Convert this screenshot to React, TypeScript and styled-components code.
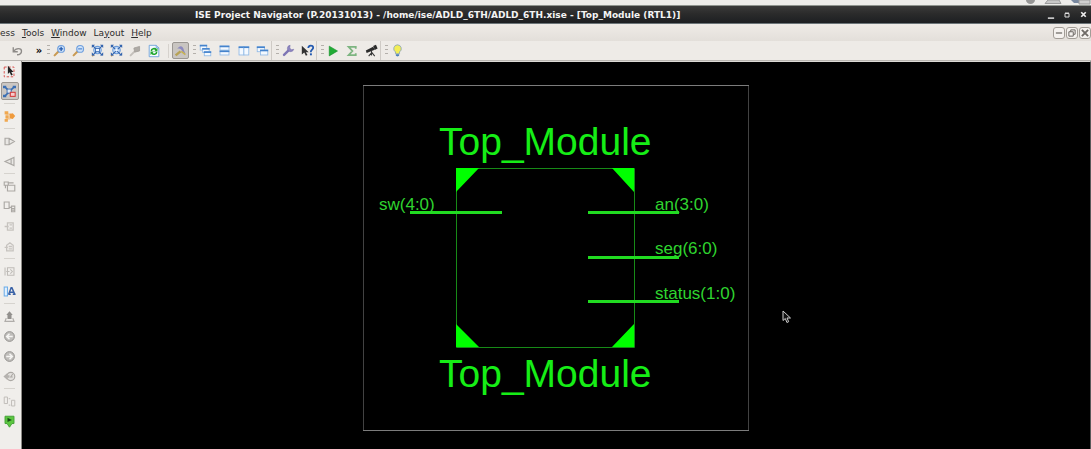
import React from "react";
import styled, { createGlobalStyle, css } from "styled-components";

const GlobalStyle = createGlobalStyle`
  * { box-sizing: border-box; }
  body { margin: 0; background: #000; font-family: "DejaVu Sans", sans-serif; }
  button { font: inherit; color: inherit; border: 0; padding: 0; background: none; }
`;

const Window = styled.div`
  display: flex;
  flex-direction: column;
  min-height: 100vh;
  overflow: hidden;
`;

const DesktopStrip = styled.div`
  display: flex;
  justify-content: flex-end;
  height: 5px;
  background: #edecea;
`;

const TitleBar = styled.header`
  display: flex;
  align-items: center;
  height: 19px;
  border-top: 1px solid #8f948f;
  border-bottom: 1px solid #6b7478;
  background: linear-gradient(#3a3a3a, #2b2b2b 45%, #1d1f22);
  color: #f4f4f4;
`;

const Title = styled.h1`
  flex: 1;
  margin: 0;
  padding-left: 195px;
  font-size: 9px;
  line-height: 16px;
  font-weight: bold;
  white-space: nowrap;
`;

const WindowControls = styled.div`
  display: flex;
  gap: 4px;
  padding-right: 2px;
`;

const WindowButton = styled.button`
  display: grid;
  place-items: center;
  width: 12px;
  height: 12px;
`;

const MenuBar = styled.nav`
  display: flex;
  align-items: center;
  gap: 7px;
  height: 17px;
  background: linear-gradient(#efebe7, #e3dfda);
  color: #2c2c2c;
`;

const MenuItem = styled.button`
  font-size: 9px;
  line-height: 16px;
`;

const DocumentControls = styled.div`
  display: flex;
  gap: 1px;
  margin-left: auto;
`;

const DocumentButton = styled.button`
  display: grid;
  place-items: center;
  width: 12px;
  height: 12px;
  border: 1px solid #a29d97;
  border-radius: 3px;
  background: #f5f2ef;
`;

const Toolbar = styled.div`
  display: flex;
  height: 20px;
  background: #eeebe7;
  border-bottom: 1px solid #b9b6b1;
`;

const HistoryGroup = styled.div`
  display: flex;
  align-items: center;
  gap: 10px;
  width: 43px;
  padding-left: 9px;
`;

const ToolGroup = styled.div<{ $open?: boolean }>`
  display: flex;
  align-items: center;
  gap: 3px;
  padding-left: 4px;
  padding-right: ${(p) => (p.$open ? "0" : "1px")};
  border-right: ${(p) => (p.$open ? "0" : "1px solid #cfcbc6")};
`;

const Grip = styled.span`
  width: 3px;
  height: 11px;
  margin-right: -2px;
  background: repeating-linear-gradient(#b4b0ab 0 1px, #eeebe7 1px 4px);
`;

const ToolButton = styled.button<{ $active?: boolean; $narrow?: boolean }>`
  display: grid;
  place-items: center;
  width: ${(p) => (p.$narrow ? "8px" : "16px")};
  height: 16px;
  font-size: 10px;
  line-height: 12px;
  font-weight: bold;
  ${(p) =>
    p.$active &&
    css`
      width: 17px;
      height: 17px;
      border: 1px solid #9b9792;
      border-radius: 2px;
      background: #c9c5c1;
    `}
`;

const Divider = styled.span<{ $across?: boolean }>`
  ${(p) =>
    p.$across
      ? css`
          width: 11px;
          height: 1px;
          margin: 2px 0;
          background: #d6d3ce;
        `
      : css`
          width: 1px;
          height: 14px;
          margin-left: 3px;
          background: #d6d2cd;
        `}
`;

const Workspace = styled.main`
  display: flex;
  flex: 1;
`;

const SideBar = styled.aside`
  display: flex;
  flex-direction: column;
  align-items: center;
  width: 22px;
  padding-right: 2px;
  background: #f0eeeb;
  border-right: 1px solid #8d8a86;
`;

const SideButton = styled.button<{ $active?: boolean }>`
  display: grid;
  place-items: center;
  width: 18px;
  height: 20px;
  ${(p) =>
    p.$active &&
    css`
      height: 18px;
      margin: 1px 0;
      border: 1px solid #9b9792;
      border-radius: 2px;
      background: #cbc7c3;
    `}
`;

const Canvas = styled.section`
  position: relative;
  display: flex;
  flex: 1;
  justify-content: center;
  align-items: flex-start;
  padding-top: 23px;
  background: #000;
  border-top: 1px solid #dcdad6;
  border-right: 1px solid #5a5a5a;
`;

const Pointer = styled.svg`
  position: absolute;
  left: calc(50% + 226px);
  top: 248px;
`;

const SchematicText = styled.text<{ $size: number }>`
  font-family: "Liberation Sans", Arial, sans-serif;
  font-size: ${(p) => p.$size}px;
  fill: ${(p) => (p.$size > 20 ? "#16ee16" : "#2fd42f")};
`;

type Art = { children: React.ReactNode; size?: number };
const Icon = ({ children, size = 13 }: Art) => (
  <svg width={size} height={size} viewBox="0 0 16 16" fill="none" aria-hidden="true">
    {children}
  </svg>
);

const Magnifier = ({ sign }: { sign: React.ReactNode }) => (
  <Icon>
    <path d="M2 14 L7 9" stroke="#c99a52" strokeWidth="2.6" strokeLinecap="round" />
    <circle cx="10" cy="6" r="4.2" fill="#cfe2f8" stroke="#6f9fdd" strokeWidth="1.4" />
    {sign}
  </Icon>
);

const ZoomFit = ({ box }: { box?: boolean }) => (
  <Icon>
    <circle cx="8" cy="7.5" r="4.6" fill="#c4dcf8" stroke="#6a9ad8" strokeWidth="1.3" />
    <path d="M3 13 L1.5 15" stroke="#d39b4b" strokeWidth="2" />
    <path d="M1 1h4L1 5zM15 1h-4l4 4zM1 14V10l4 4zM15 14V10l-4 4z" fill="#3465ae" />
    <path d="M2 2l12 12M14 2L2 14" stroke="#3465ae" strokeWidth="1.4" />
    {box ? <circle cx="8" cy="7.5" r="1.8" fill="#eef6ff" /> : <rect x="5.5" y="5.5" width="5" height="4" fill="#eef6ff" stroke="#3465ae" />}
  </Icon>
);

const Pane = ({ x, y, w, h }: { x: number; y: number; w: number; h: number }) => (
  <g>
    <rect x={x + 0.5} y={y + 0.5} width={w} height={h} fill="#f4f9ff" stroke="#8db8e6" />
    <rect x={x} y={y} width={w + 1} height="2" fill="#4583cc" />
  </g>
);

const BACK = "M12 8H5M8 4.5L4.5 8L8 11.5";
const FORWARD = "M4 8h7M8 4.5L11.5 8L8 11.5";

const Disc = ({ d }: { d: string }) => (
  <Icon>
    <circle cx="8" cy="8" r="6" fill="#bfbdba" stroke="#94928f" strokeWidth="1.2" />
    <path d={d} stroke="#f6f5f3" strokeWidth="1.8" />
  </Icon>
);

const zoomTools: [string, React.ReactNode][] = [
  ["Zoom in", <Magnifier sign={<path d="M10 3.5v5M7.5 6h5" stroke="#1f57ad" strokeWidth="1.5" />} />],
  ["Zoom out", <Magnifier sign={<path d="M7.5 6h5" stroke="#4b83cf" strokeWidth="1.4" />} />],
  ["Zoom to full view", <ZoomFit />],
  ["Zoom to box", <ZoomFit box />],
  ["Zoom to selected", (
    <Icon>
      <path d="M2 14l4-4" stroke="#c4c0bb" strokeWidth="2.4" strokeLinecap="round" />
      <path d="M6 5L13 3V8.500L7 10z" fill="#aeaaa5" stroke="#a29e99" />
    </Icon>
  )],
  ["Refresh", (
    <Icon size={14}>
      <path d="M2.5 1.5h8l3 3v10h-11z" fill="#f4faff" stroke="#6a9fd8" />
      <path d="M10.5 1.5v3h3" stroke="#6a9fd8" />
      <path d="M5 8c0-3 4-3.5 5.5-1.5M11 9c0 3-4 3.5-5.5 1.5" stroke="#1fa62b" strokeWidth="1.8" />
      <path d="M12 4.5v4H8zM4 12.5v-4h4z" fill="#1fa62b" />
    </Icon>
  )],
];

const windowTools: [string, React.ReactNode][] = [
  ["Cascade", <Icon><Pane x={1} y={1} w={8} h={6} /><Pane x={4} y={5} w={8} h={5} /><Pane x={6} y={9} w={8} h={5} /></Icon>],
  ["Tile horizontally", <Icon><Pane x={2} y={2} w={11} h={5} /><Pane x={2} y={8} w={11} h={5} /></Icon>],
  ["Tile vertically", <Icon><Pane x={2} y={3} w={6} h={10} /><Pane x={8} y={3} w={6} h={10} /></Icon>],
  ["Float", <Icon><Pane x={1} y={3} w={9} h={6} /><Pane x={5} y={7} w={9} h={6} /></Icon>],
];

const helpTools: [string, React.ReactNode][] = [
  ["Design properties", (
    <Icon>
      <path d="M2.5 13.5L9 7" stroke="#7d75b4" strokeWidth="3" strokeLinecap="round" />
      <path d="M10 1.5a4 4 0 1 0 4.5 5L11.5 7 9.5 5z" fill="#8d86c0" stroke="#6f68a6" strokeWidth=".6" />
    </Icon>
  )],
  ["What's this", (
    <Icon>
      <path d="M1 2v11l3-2.5 2 4 2-1-2-3.5h3.5z" fill="#333" />
      <path d="M9 5c0-4 6-4 6-.5C15 7 12 7 12 10" stroke="#245ab0" strokeWidth="2.2" />
      <rect x="11" y="11.5" width="2.4" height="2.4" fill="#245ab0" />
    </Icon>
  )],
];

const runTools: [string, React.ReactNode][] = [
  ["Run", <Icon size={12}><path d="M3 1.5L14 8 3 14.5z" fill="#22ab36" stroke="#0f9126" strokeWidth=".8" /></Icon>],
  ["Summary", <Icon size={12}><path d="M13 5V2.5H3.5L8.500 8l-5 5.500H13V11" stroke="#7db581" strokeWidth="2.4" /></Icon>],
  ["Analyze", (
    <Icon>
      <path d="M1 8L10 3.500l2 3.500L2 11z" fill="#2b2b2b" />
      <path d="M10 2.500l3.500-1.500 2 4.500L12 7.500z" fill="#2b2b2b" />
      <path d="M8 8v3L4.500 15M8 10l4 5M8 9v5" stroke="#3a3a3a" strokeWidth="1.3" />
    </Icon>
  )],
];

const tipTools: [string, React.ReactNode][] = [
  ["Tip of the day", (
    <Icon>
      <path d="M8 1a4.800 4.800 0 0 0-2.500 8.800V12h5V9.800A4.800 4.800 0 0 0 8 1z" fill="#f3ee55" stroke="#8ea7b5" strokeWidth="1.1" />
      <path d="M6 12.5h4v2L8 15.5 6 14.5z" fill="#4c7fb8" />
    </Icon>
  )],
];

const GREY = "#aba8a4";

const sideGroups: [string, React.ReactNode][][] = [
  [
    ["Select", (
      <Icon>
        <rect x="1.5" y="2.5" width="12" height="12" stroke="#d9534f" strokeWidth="1.2" strokeDasharray="3 2" />
        <path d="M6 1v10l2.200-2 1.800 4 2-1-1.800-3.500H13z" fill="#222" />
      </Icon>
    )],
    ["Select nets", (
      <Icon>
        <path d="M2 2l12 12M14 2L2 14" stroke="#3b6fb4" strokeWidth="1.8" />
        <rect x="5" y="5" width="5" height="5" fill="#dce8f6" stroke="#2f62a8" />
        <path d="M0 1h4v3H0zM12 1h4v3h-4zM0 12h4v3H0z" fill="#3b6fb4" />
        <rect x="9" y="9" width="6" height="5" fill="#f6cccc" stroke="#d43c3c" strokeWidth="1.3" />
      </Icon>
    )],
  ],
  [["Add symbols", (
    <Icon>
      <path d="M4 5h6M4 11h5M9 8h4" stroke="#f0b473" strokeWidth="1.2" />
      <path d="M2 1.500h4.500v4H2zM3 6.500h4v4H3zM2 11h4v3.500H2z" fill="#f0a850" />
      <path d="M8 5l4-1 3 3.500-3 3.500-4-1z" fill="#ef9a3c" />
    </Icon>
  )]],
  [
    ["Forward cone", <Icon><path d="M2.5 4h5L14 8l-6.500 4h-5zM7.500 4v8" stroke={GREY} strokeWidth="1.4" fill="#e9e7e4" /></Icon>],
    ["Backward cone", <Icon><path d="M13.5 3v10L2.5 8zM10 5v6" stroke={GREY} strokeWidth="1.4" fill="#e9e7e4" /></Icon>],
  ],
  [
    ["Push into", <Icon><path d="M5.5 6.500h9v7h-9zM1.5 2.500h5v4h-5zM3 6.500V10M7 3.500h6" stroke={GREY} strokeWidth="1.4" /></Icon>],
    ["Pop out", <Icon><path d="M1.5 2.500h6v8h-6zM10.5 7.500h4v7h-4zM8 9h3M11 10.500h4M11 12.500h4" stroke={GREY} strokeWidth="1.4" /></Icon>],
    ["Expand", <Icon><path d="M5.5 3.500h7v9h-7zM2 8h5M8 6h3M8 10h3" stroke="#c6c3bf" strokeWidth="1.6" /></Icon>],
    ["Collapse", <Icon><path d="M4.5 13.500v-7l4-3 4 3v7zM2 9h4M7 8h4M7 11h4" stroke="#c6c3bf" strokeWidth="1.6" /></Icon>],
  ],
  [
    ["Show pins", <Icon><path d="M2.5 3v10M5.5 3.500h8v9h-8zM4 8h4M9 5.500L11.5 8 9 10.500" stroke="#bfbcb8" strokeWidth="1.3" /></Icon>],
    ["Add text", (
      <Icon>
        <rect x="1.5" y="2.5" width="4" height="11" fill="#e3f1ff" stroke="#6faee8" strokeWidth="1.3" />
        <path d="M7 11.500L10 3.500h1l3.500 8M8.500 9h5M6.500 11.500h3M12 11.500h3.500" stroke="#3a62a6" strokeWidth="1.8" />
      </Icon>
    )],
  ],
  [
    ["Up a level", <Icon><path d="M8 1.5L12 6H10.500v5h-5V6H4z" fill="#92908d" /><path d="M4 10l-1.500 4h11L12 10" stroke="#b0adaa" strokeWidth="1.5" /></Icon>],
    ["Back", <Disc d={BACK} />],
    ["Forward", <Disc d={FORWARD} />],
    ["History", (
      <Icon>
        <circle cx="9.5" cy="8" r="5" fill="#e3e1de" stroke={GREY} strokeWidth="1.4" />
        <path d="M12 5L9.500 8.500H12" stroke={GREY} strokeWidth="1.3" />
        <path d="M0.5 8L5 4v2.500h3v3H5V12z" fill="#b5b2af" />
      </Icon>
    )],
  ],
  [
    ["Compare", <Icon><path d="M1.5 2.500h4v8h-4zM10.5 6.500h4v7h-4zM7 12.500h2M7 4.500h2" stroke="#bfbcb8" strokeWidth="1.2" /></Icon>],
    ["Add marker", (
      <Icon>
        <path d="M2.5 1.500h11v9H11L8 15l-3-4.500H2.5z" fill="#5cc740" stroke="#45a138" strokeWidth="1.2" />
        <path d="M5.500 3.500v5L11 6z" fill="#174d17" />
      </Icon>
    )],
  ],
];

const Tools = ({ items }: { items: [string, React.ReactNode][] }) => (
  <>
    <Grip />
    {items.map(([label, art]) => (
      <ToolButton key={label} aria-label={label}>{art}</ToolButton>
    ))}
  </>
);

const Schematic = () => (
  <svg width="386" height="346" viewBox="0 0 386 346" role="img" aria-label="Top_Module schematic">
    <path d="M0 .5H386M0 345.5H386" stroke="#7c7c7c" />
    <path d="M.5 1V345M385.5 1V345" stroke="#424242" />
    <path d="M93.5 83.5H271.5V262.5H93.5z" fill="none" stroke="#178a17" />
    <path d="M93 83h23l-23 24zM271 83h-22l22 24zM93 262h23l-23-23zM271 262h-22l22-23z" fill="#0f0" />
    <path d="M47 127.500h92M225 127.500h91M225 172.500h91M225 216.500h91" stroke="#21dc21" strokeWidth="3" />
    <SchematicText $size={39} x="76" y="70">Top_Module</SchematicText>
    <SchematicText $size={39} x="76" y="302">Top_Module</SchematicText>
    <SchematicText $size={17} x="16" y="125">sw(4:0)</SchematicText>
    <SchematicText $size={17} x="292" y="125">an(3:0)</SchematicText>
    <SchematicText $size={17} x="292" y="169">seg(6:0)</SchematicText>
    <SchematicText $size={17} x="292" y="214">status(1:0)</SchematicText>
  </svg>
);

export default function App() {
  return (
    <Window>
      <GlobalStyle />
      <DesktopStrip>
        <svg width="68" height="5" viewBox="0 0 68 5" aria-hidden="true">
          <path d="M3 0h9a4.500 4 0 0 1-9 0z" fill="#969696" />
          <path d="M25 0h11l2 3.500H22z" fill="#c8c8c8" stroke="#9b9b9b" />
          <path d="M48 0h8v3h-5z" fill="#7888a0" />
          <path d="M56 0h11v4H56z" fill="#d0d0d0" stroke="#9b9b9b" />
        </svg>
      </DesktopStrip>
      <TitleBar>
        <Title>ISE Project Navigator (P.20131013) - /home/ise/ADLD_6TH/ADLD_6TH.xise - [Top_Module (RTL1)]</Title>
        <WindowControls>
          <WindowButton aria-label="Minimize"><Icon size={10}><path d="M3 13h10" stroke="#ddd" strokeWidth="2.4" /></Icon></WindowButton>
          <WindowButton aria-label="Maximize"><Icon size={8}><path d="M4 5h8v7H4zM4 4h8" stroke="#ddd" strokeWidth="2" /></Icon></WindowButton>
          <WindowButton aria-label="Close"><Icon size={9}><path d="M4 4l8 8M12 4l-8 8" stroke="#eee" strokeWidth="3" /></Icon></WindowButton>
        </WindowControls>
      </TitleBar>
      <MenuBar>
        <MenuItem>ess</MenuItem>
        <MenuItem><u>T</u>ools</MenuItem>
        <MenuItem><u>W</u>indow</MenuItem>
        <MenuItem>La<u>y</u>out</MenuItem>
        <MenuItem><u>H</u>elp</MenuItem>
        <DocumentControls>
          <DocumentButton aria-label="Minimize document"><Icon size={10}><path d="M3 8h10" stroke="#6e6a66" strokeWidth="2" /></Icon></DocumentButton>
          <DocumentButton aria-label="Restore document"><Icon size={10}><path d="M3 6h7v7H3zM6 6V3h7v7h-3" stroke="#6e6a66" strokeWidth="1.6" /></Icon></DocumentButton>
          <DocumentButton aria-label="Close document"><Icon size={10}><path d="M3 3l10 10M13 3L3 13" stroke="#6e6a66" strokeWidth="3" /></Icon></DocumentButton>
        </DocumentControls>
      </MenuBar>
      <Toolbar>
        <HistoryGroup>
          <ToolButton aria-label="Undo">
            <Icon size={12}><path d="M3 3v6h6M3 9c4-6 11-5 11-1 0 3-2 5-6 5" stroke="#8e8b88" strokeWidth="1.8" /></Icon>
          </ToolButton>
          <ToolButton $narrow>»</ToolButton>
        </HistoryGroup>
        <ToolGroup $open>
          <Tools items={zoomTools} />
          <Divider />
          <ToolButton $active aria-label="Hand tool">
            <Icon>
              <path d="M2 14l6-5" stroke="#b7a255" strokeWidth="3" />
              <path d="M4 6c3-5 7-4 8 1l2 5-4-3C9 6 7 5 4 6z" fill="#8d8abf" />
              <path d="M9 9l5 4" stroke="#c6b152" strokeWidth="2" />
            </Icon>
          </ToolButton>
        </ToolGroup>
        <ToolGroup><Tools items={windowTools} /></ToolGroup>
        <ToolGroup><Tools items={helpTools} /></ToolGroup>
        <ToolGroup><Tools items={runTools} /></ToolGroup>
        <ToolGroup $open><Tools items={tipTools} /></ToolGroup>
      </Toolbar>
      <Workspace>
        <SideBar>
          {sideGroups.map((group, g) => (
            <React.Fragment key={g}>
              {g > 0 && <Divider $across />}
              {group.map(([label, art]) => (
                <SideButton key={label} aria-label={label} $active={label === "Select nets"}>{art}</SideButton>
              ))}
            </React.Fragment>
          ))}
        </SideBar>
        <Canvas>
          <Schematic />
          <Pointer width="10" height="14" viewBox="0 0 10 14" aria-hidden="true">
            <path d="M1 1v9.500l2.300-2 1.600 4 1.800-.8L5 8h3.500z" fill="#111" stroke="#cfcfcf" />
          </Pointer>
        </Canvas>
      </Workspace>
    </Window>
  );
}
